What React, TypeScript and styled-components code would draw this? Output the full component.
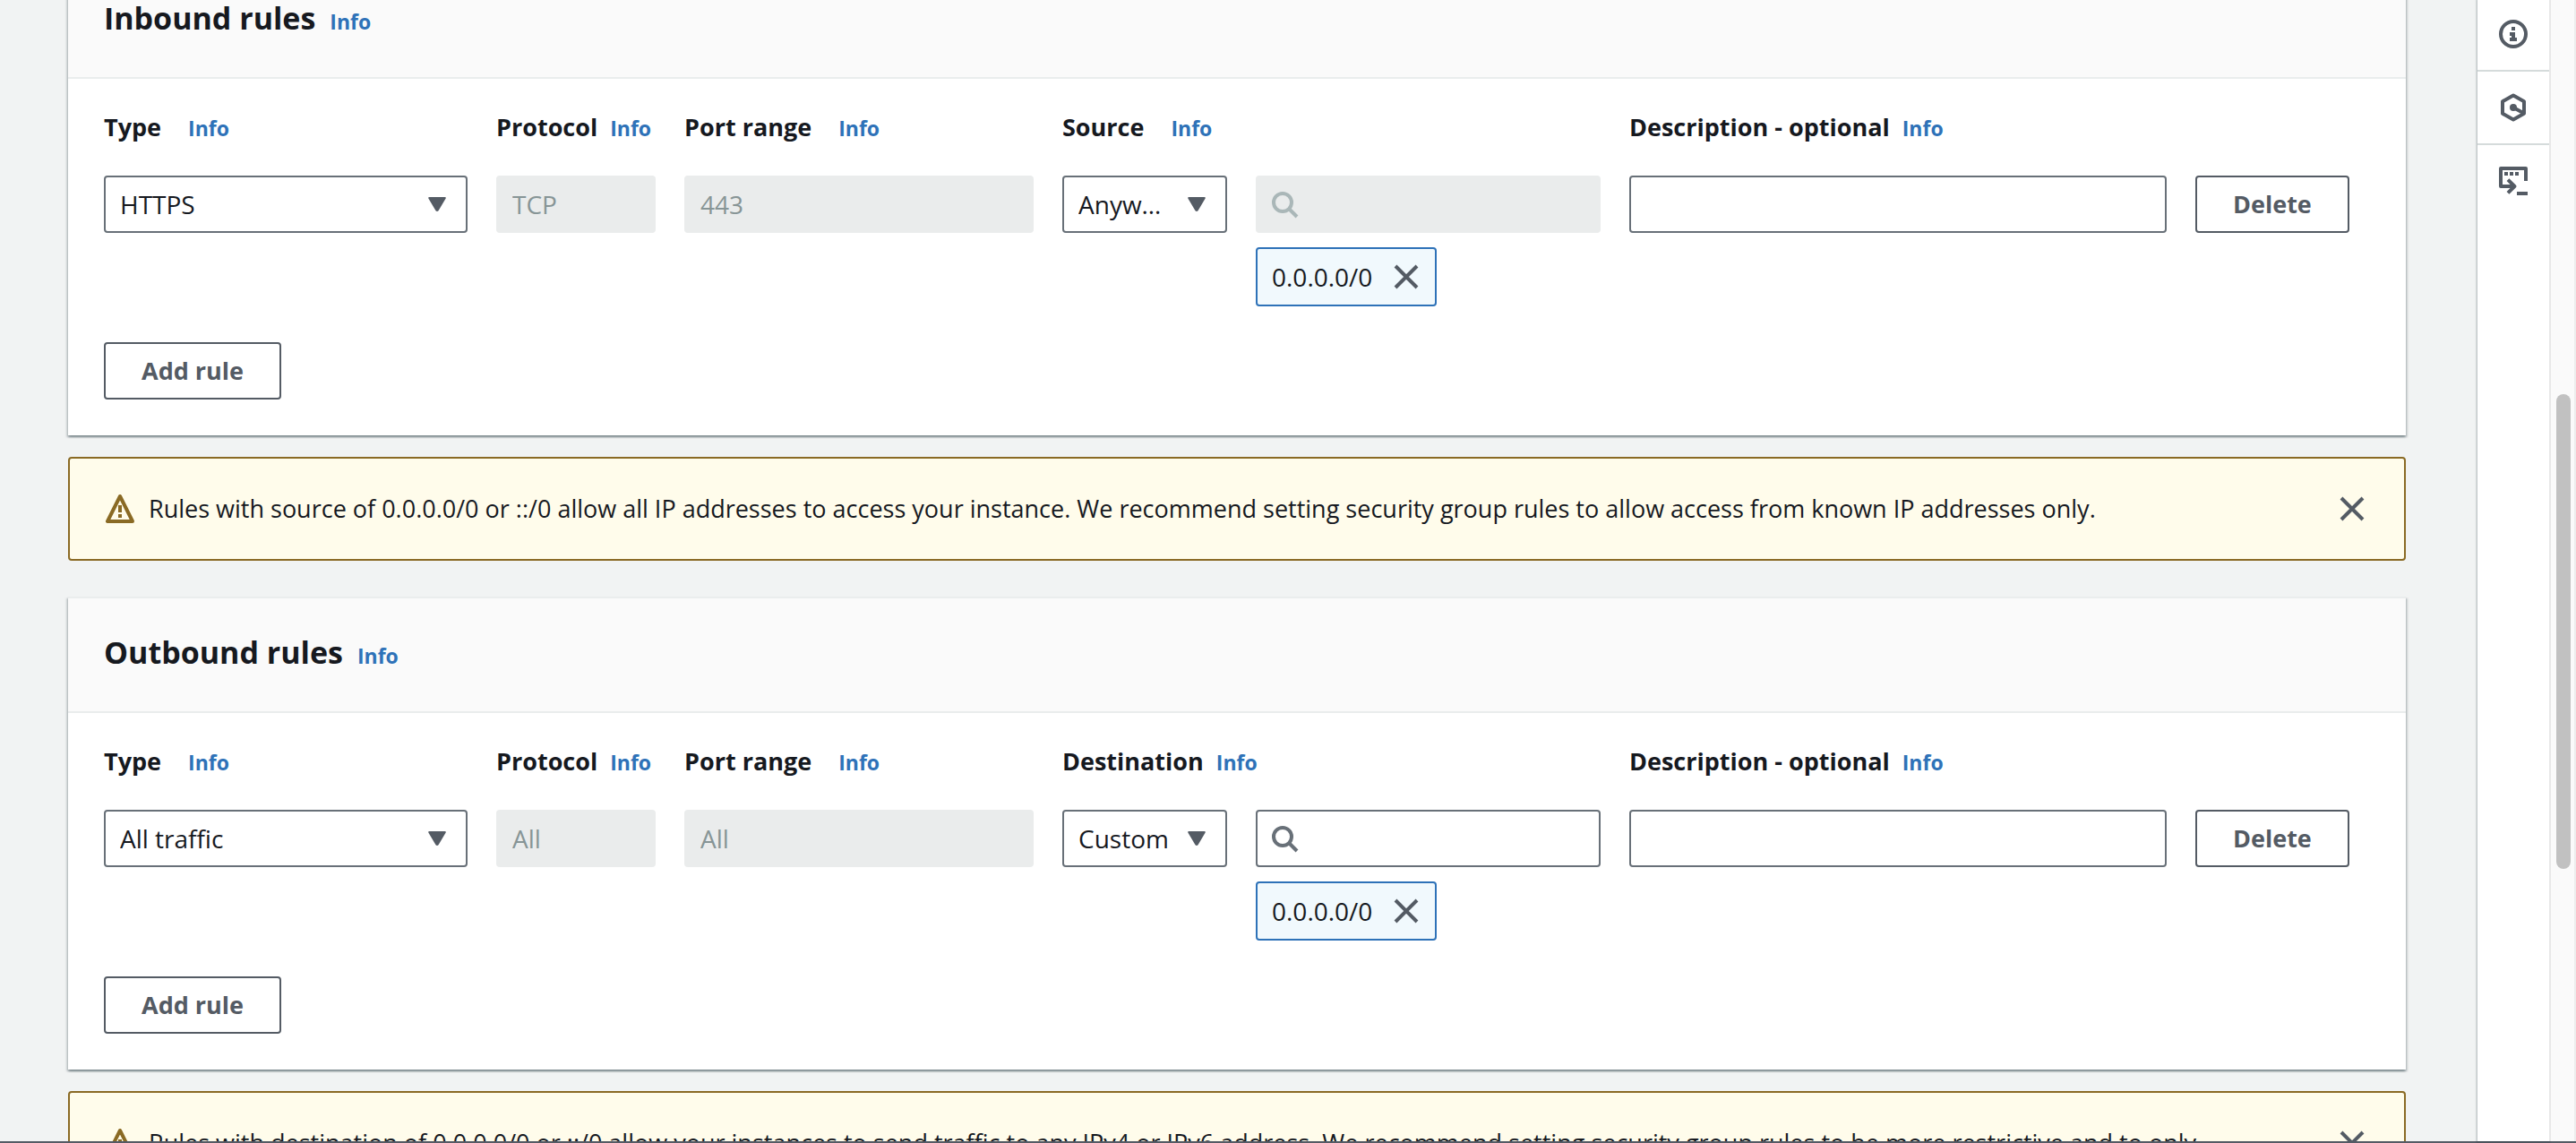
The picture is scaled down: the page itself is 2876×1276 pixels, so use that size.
import React from 'react';
import styled, { createGlobalStyle } from 'styled-components';

const color = {
  text: '#16191f',
  muted: '#545b64',
  border: '#687078',
  link: '#2e72b8',
  page: '#f1f3f3',
  disabled: '#eaecec',
  disabledText: '#879596',
  line: '#eaeded',
  warning: '#8a6a24',
};

const GlobalStyle = createGlobalStyle`
  *, *::before, *::after { box-sizing: border-box; }
  body {
    margin: 0;
    background: ${color.page};
    color: ${color.text};
    font-family: 'Open Sans', 'Noto Sans', sans-serif;
    font-size: 28px;
    line-height: 44px;
  }
  button, input, select { font: inherit; }
`;

const Page = styled.div`
  display: flex;
  flex-direction: column;
  height: 100vh;
  overflow: hidden;
`;

const Workspace = styled.div`
  display: flex;
  flex: 1;
  min-height: 0;
`;

const Main = styled.main`
  flex: 1;
  min-width: 0;
  padding: 0 80px 0 76px;
  overflow: hidden;
`;

/* The content is scrolled so that the first header is partly out of view. */
const Scrolled = styled.div`
  display: flex;
  flex-direction: column;
  gap: 40px;
  margin-top: -42px;
`;

const RuleGroup = styled.div`
  display: flex;
  flex-direction: column;
  gap: 24px;
`;

const Panel = styled.section`
  background: #fff;
  border-top: 2px solid ${color.line};
  box-shadow:
    0 2px 2px 0 rgba(0, 28, 36, 0.3),
    2px 2px 2px 0 rgba(0, 28, 36, 0.15),
    -2px 2px 2px 0 rgba(0, 28, 36, 0.15);
`;

const PanelHeader = styled.header`
  display: flex;
  align-items: baseline;
  gap: 16px;
  padding: 42px 40px 48px;
  background: #fafafa;
  border-bottom: 2px solid ${color.line};
`;

const Title = styled.h2`
  margin: 0;
  font-size: 34px;
  font-weight: 700;
  line-height: 36px;
`;

const InfoLink = styled.a`
  color: ${color.link};
  font-size: 23px;
  font-weight: 700;
  line-height: 24px;
  text-decoration: none;
`;

const PanelBody = styled.div`
  display: flex;
  flex-direction: column;
  align-items: stretch;
  gap: 40px;
  padding: 32px 40px 40px;
`;

const Grid = styled.div`
  display: grid;
  grid-template-columns: 406fr 178fr 390fr 184fr 385fr 600fr 195fr;
  column-gap: 32px;
  row-gap: 32px;
  align-items: start;
`;

const Heading = styled.div<{ $span?: number; $wide?: boolean }>`
  grid-column: span ${(p) => p.$span ?? 1};
  display: flex;
  align-items: baseline;
  gap: ${(p) => (p.$wide ? 30 : 14)}px;
  min-width: 0;
  white-space: nowrap;
`;

const Label = styled.label`
  font-size: 27px;
  font-weight: 700;
`;

const SelectWrap = styled.div`
  position: relative;
`;

const Select = styled.select`
  display: block;
  width: 100%;
  height: 64px;
  padding: 0 56px 0 16px;
  appearance: none;
  color: ${color.text};
  background: #fff;
  border: 2px solid ${color.border};
  border-radius: 4px;
`;

const Caret = styled.svg`
  position: absolute;
  top: 24px;
  right: 24px;
  width: 20px;
  height: 16px;
  fill: ${color.muted};
  pointer-events: none;
`;

const TextInput = styled.input<{ $search?: boolean }>`
  display: block;
  width: 100%;
  min-width: 0;
  height: 64px;
  padding: 0 16px 0 ${(p) => (p.$search ? 56 : 16)}px;
  color: ${color.text};
  background: #fff;
  border: 2px solid ${color.border};
  border-radius: 4px;

  &:disabled {
    color: ${color.disabledText};
    background: ${color.disabled};
    border-color: ${color.disabled};
  }
`;

const SearchCell = styled.div`
  display: flex;
  flex-direction: column;
  align-items: flex-start;
  gap: 16px;
`;

const SearchBox = styled.div`
  position: relative;
  width: 100%;
`;

const SearchIcon = styled.svg<{ $dim?: boolean }>`
  position: absolute;
  top: 16px;
  left: 16px;
  width: 32px;
  height: 32px;
  fill: none;
  stroke: ${(p) => (p.$dim ? '#aab7b8' : color.border)};
  stroke-width: 2;
`;

const Chip = styled.span`
  display: flex;
  align-items: center;
  gap: 22px;
  height: 66px;
  padding: 0 16px;
  background: #f1f9fd;
  border: 2px solid ${color.link};
  border-radius: 4px;
`;

const IconButton = styled.button`
  display: flex;
  padding: 0;
  color: ${color.muted};
  background: none;
  border: 0;
  cursor: pointer;
`;

const Icon = styled.svg`
  display: block;
  flex: none;
  width: 32px;
  height: 32px;
  fill: none;
  stroke: currentColor;
  stroke-width: 2;
`;

const Button = styled.button`
  justify-self: start;
  align-self: flex-start;
  height: 64px;
  padding: 0 40px;
  color: ${color.muted};
  font-size: 27px;
  font-weight: 700;
  white-space: nowrap;
  background: #fff;
  border: 2px solid ${color.muted};
  border-radius: 4px;
  cursor: pointer;
`;

const Alert = styled.div`
  display: flex;
  align-items: center;
  gap: 16px;
  height: 116px;
  padding: 0 42px 0 40px;
  color: ${color.warning};
  background: #fffceb;
  border: 2px solid ${color.warning};
  border-radius: 4px;
`;

const AlertText = styled.p`
  flex: 1;
  margin: 0;
  color: ${color.text};
  font-size: 27px;
  white-space: nowrap;
`;

const ToolRail = styled.aside`
  position: relative;
  width: 80px;
  background: #fff;
  box-shadow: 0 0 2px 1px rgba(0, 28, 36, 0.3);
`;

const Tool = styled.button`
  display: flex;
  align-items: center;
  justify-content: center;
  width: 100%;
  height: 82px;
  padding: 0;
  color: ${color.muted};
  background: #fff;
  border: 0;
  border-bottom: 2px solid #d5dbdb;

  &:first-child { height: 80px; padding-bottom: 2px; }
  &:last-child { border-bottom-color: transparent; }
`;

const ScrollTrack = styled.div`
  position: relative;
  width: 30px;
  padding: 440px 4px 0 6px;
  background: #fafafa;
  border-left: 2px solid #e8e8e8;
  border-right: 2px solid #ededed;
`;

const ScrollThumb = styled.div`
  width: 16px;
  height: 530px;
  background: #c1c1c1;
  border-radius: 8px;
`;

const BottomBar = styled.div`
  flex: none;
  height: 2px;
  background: #545b64;
`;

const CloseIcon = () => (
  <Icon viewBox="0 0 16 16" aria-hidden="true">
    <path d="M2 2l12 12M14 2L2 14" />
  </Icon>
);

const WarningIcon = () => (
  <Icon viewBox="0 0 16 16" aria-hidden="true">
    <path d="M8 1L1 15h14z" strokeLinejoin="round" />
    <path d="M8 6v4M8 11v2" />
  </Icon>
);

const CaretIcon = () => (
  <Caret viewBox="0 0 20 16" aria-hidden="true">
    <path d="M1.5 0h17q2 0 1 1.800l-8 13.400q-1.500 1.600-3 0l-8-13.400Q-.5 0 1.500 0z" />
  </Caret>
);

type RulesProps = {
  id: string;
  title: string;
  type: string;
  protocol: string;
  port: string;
  peerLabel: string;
  peerWide?: boolean;
  peer: string;
  searchDisabled?: boolean;
  warning: string;
};

const Info = () => <InfoLink href="#info">Info</InfoLink>;

function Rules(p: RulesProps) {
  return (
    <RuleGroup>
      <Panel>
        <PanelHeader>
          <Title>{p.title}</Title>
          <Info />
        </PanelHeader>
        <PanelBody>
          <Grid>
            <Heading $wide>
              <Label htmlFor={`${p.id}-type`}>Type</Label>
              <Info />
            </Heading>
            <Heading>
              <Label htmlFor={`${p.id}-protocol`}>Protocol</Label>
              <Info />
            </Heading>
            <Heading $wide>
              <Label htmlFor={`${p.id}-port`}>Port range</Label>
              <Info />
            </Heading>
            <Heading $span={2} $wide={p.peerWide}>
              <Label htmlFor={`${p.id}-peer`}>{p.peerLabel}</Label>
              <Info />
            </Heading>
            <Heading $span={2}>
              <Label htmlFor={`${p.id}-description`}>Description - optional</Label>
              <Info />
            </Heading>

            <SelectWrap>
              <Select id={`${p.id}-type`}>
                <option>{p.type}</option>
              </Select>
              <CaretIcon />
            </SelectWrap>
            <TextInput id={`${p.id}-protocol`} defaultValue={p.protocol} disabled />
            <TextInput id={`${p.id}-port`} defaultValue={p.port} disabled />
            <SelectWrap>
              <Select id={`${p.id}-peer`}>
                <option>{p.peer}</option>
              </Select>
              <CaretIcon />
            </SelectWrap>
            <SearchCell>
              <SearchBox>
                <TextInput type="text" $search aria-label={`${p.peerLabel} address`} disabled={p.searchDisabled} />
                <SearchIcon viewBox="0 0 16 16" $dim={p.searchDisabled} aria-hidden="true">
                  <circle cx="7" cy="7" r="5" />
                  <path d="M10.500 10.500L15 15" />
                </SearchIcon>
              </SearchBox>
              <Chip>
                0.0.0.0/0
                <IconButton aria-label="Remove 0.0.0.0/0">
                  <CloseIcon />
                </IconButton>
              </Chip>
            </SearchCell>
            <TextInput id={`${p.id}-description`} type="text" />
            <Button>Delete</Button>
          </Grid>
          <Button>Add rule</Button>
        </PanelBody>
      </Panel>
      <Alert role="alert">
        <WarningIcon />
        <AlertText>{p.warning}</AlertText>
        <IconButton aria-label="Dismiss">
          <CloseIcon />
        </IconButton>
      </Alert>
    </RuleGroup>
  );
}

export default function App() {
  return (
    <Page>
      <GlobalStyle />
      <Workspace>
        <Main>
          <Scrolled>
            <Rules
              id="inbound"
              title="Inbound rules"
              type="HTTPS"
              protocol="TCP"
              port="443"
              peerLabel="Source"
              peerWide
              peer="Anyw…"
              searchDisabled
              warning="Rules with source of 0.0.0.0/0 or ::/0 allow all IP addresses to access your instance. We recommend setting security group rules to allow access from known IP addresses only."
            />
            <Rules
              id="outbound"
              title="Outbound rules"
              type="All traffic"
              protocol="All"
              port="All"
              peerLabel="Destination"
              peer="Custom"
              warning="Rules with destination of 0.0.0.0/0 or ::/0 allow your instances to send traffic to any IPv4 or IPv6 address. We recommend setting security group rules to be more restrictive and to only"
            />
          </Scrolled>
        </Main>
        <ToolRail>
          <Tool aria-label="Information">
            <Icon viewBox="0 0 16 16" aria-hidden="true">
              <circle cx="8" cy="8" r="7" />
              <path d="M7 4h2v2H7zM6 7h3v3h1v2H6v-2h1V9H6z" fill="currentColor" stroke="none" />
            </Icon>
          </Tool>
          <Tool aria-label="Diagnostics">
            <Icon viewBox="0 0 16 16" aria-hidden="true">
              <path d="M8 1.200l6 3.400v6.800l-6 3.400-6-3.400V4.600z" strokeLinejoin="round" />
              <path d="M8 8l5.500 3" />
              <circle cx="8" cy="8" r="2" fill="currentColor" stroke="none" />
            </Icon>
          </Tool>
          <Tool aria-label="CloudShell">
            <Icon viewBox="0 0 16 16" aria-hidden="true">
              <path d="M15 8V1H1v10h7.500M5 7.300L8.700 11 5 14.700M10 15h6" strokeLinejoin="round" />
              <path d="M3 3h2v2H3zM6 3h2v2H6zM9 3h2v2H9z" fill="currentColor" stroke="none" />
            </Icon>
          </Tool>
        </ToolRail>
        <ScrollTrack>
          <ScrollThumb />
        </ScrollTrack>
      </Workspace>
      <BottomBar />
    </Page>
  );
}
